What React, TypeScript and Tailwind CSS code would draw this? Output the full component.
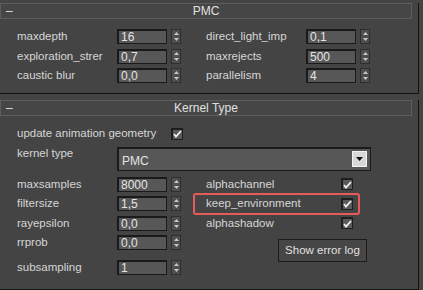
import React from "react";

const font = { fontFamily: '"Liberation Sans", Tahoma, sans-serif' };

function Spinner() {
  return (
    <div className="flex h-[15px] w-[10px] flex-col items-center justify-center gap-[3px] border border-[#2e2e2e] bg-[#4e4e4e]">
      <svg width="5" height="3" viewBox="0 0 5 3">
        <path d="M2.5 0L5 3H0z" fill="#c8c8c8" />
      </svg>
      <svg width="5" height="3" viewBox="0 0 5 3">
        <path d="M0 0h5L2.5 3z" fill="#c8c8c8" />
      </svg>
    </div>
  );
}

function NumField({ label, value }: { label: string; value: string }) {
  return (
    <div className="flex h-[19.5px] items-center">
      <span className="w-[100px] shrink-0 text-[#d6d6d6]">{label}</span>
      <div className="flex h-[15px] w-[50px] items-center border border-[#1a1a1a] border-t-2 border-l-2 bg-[#575757] pl-[2px] text-[12px] text-[#e4e4e4]">
        {value}
      </div>
      <div className="ml-[4px]">
        <Spinner />
      </div>
    </div>
  );
}

function Check() {
  return (
    <div className="flex h-[12px] w-[12px] items-center justify-center border border-[#1e1e1e] border-t-2 border-l-2 bg-[#5a5a5a]">
      <svg width="9" height="8" viewBox="0 0 9 8">
        <path d="M1 4l2 2.5L8 1" stroke="#f0f0f0" strokeWidth="1.8" fill="none" />
      </svg>
    </div>
  );
}

function CheckRow({ label, boxed }: { label: string; boxed?: boolean }) {
  if (boxed) {
    return (
      <div className="-my-[1.25px] -ml-[13px] flex h-[22px] w-[167px] items-center rounded-[3px] border-2 border-[#e35b5b] pl-[11px]">
        <span className="w-[135px] text-[#d6d6d6]">{label}</span>
        <Check />
      </div>
    );
  }
  return (
    <div className="flex h-[19.5px] items-center">
      <span className="w-[135px] text-[#d6d6d6]">{label}</span>
      <Check />
    </div>
  );
}

function Header({ title }: { title: string }) {
  return (
    <div className="relative mr-[6px] flex h-[16px] items-center justify-center border border-[#5e5e5e] bg-[#464646] text-[12px] text-[#e0e0e0]">
      <span className="absolute left-[5px] top-[1px]">–</span>
      {title}
    </div>
  );
}

export default function App() {
  return (
    <div className="h-[290px] w-[423px] overflow-hidden bg-[#444444] pt-[3px] text-[11.5px] leading-none" style={font}>
      {/* PMC */}
      <div className="w-[419px] border-r border-b border-[#141414] pb-[7px]">
        <Header title="PMC" />
        <div className="flex pl-[17px] pt-[8px]">
          <div className="w-[189px]">
            <NumField label="maxdepth" value="16" />
            <NumField label="exploration_strer" value="0,7" />
            <NumField label="caustic blur" value="0,0" />
          </div>
          <div>
            <NumField label="direct_light_imp" value="0,1" />
            <NumField label="maxrejects" value="500" />
            <NumField label="parallelism" value="4" />
          </div>
        </div>
      </div>

      {/* Kernel Type */}
      <div className="mt-[6px] h-[190px] w-[419px] border-r border-b border-[#141414]">
        <Header title="Kernel Type" />
        <div className="pl-[17px] pt-[8px]">
          <div className="flex h-[20px] items-center">
            <span className="w-[154px] text-[#d6d6d6]">update animation geometry</span>
            <Check />
          </div>
          <div className="mt-[3px] flex h-[24px] items-start">
            <span className="w-[100px] pt-[1px] text-[#d6d6d6]">kernel type</span>
            <div className="flex h-[24px] w-[254px] items-center justify-between border border-[#1a1a1a] border-t-2 border-l-2 bg-[#575757] pl-[3px] pr-[3px] text-[12px] text-[#e4e4e4]">
              <span className="pt-[3px]">PMC</span>
              <div className="flex h-[16px] w-[15px] items-center justify-center border border-[#f4f4f4] bg-[#d9d9d9]">
                <svg width="7" height="4" viewBox="0 0 7 4">
                  <path d="M0 0h7L3.5 4z" fill="#111" />
                </svg>
              </div>
            </div>
          </div>
          <div className="mt-[4px] flex">
            <div className="w-[176px]">
              <NumField label="maxsamples" value="8000" />
              <NumField label="filtersize" value="1,5" />
              <NumField label="rayepsilon" value="0,0" />
              <NumField label="rrprob" value="0,0" />
              <div className="mt-[5px]">
                <NumField label="subsampling" value="1" />
              </div>
            </div>
            <div className="pl-[13px]">
              <CheckRow label="alphachannel" />
              <CheckRow label="keep_environment" boxed />
              <CheckRow label="alphashadow" />
              <div className="mt-[6px] ml-[72px] flex h-[23px] w-[89px] items-center justify-center border border-[#1c1c1c] bg-[#464646] text-[#e0e0e0]">
                Show error log
              </div>
            </div>
          </div>
        </div>
      </div>
    </div>
  );
}
